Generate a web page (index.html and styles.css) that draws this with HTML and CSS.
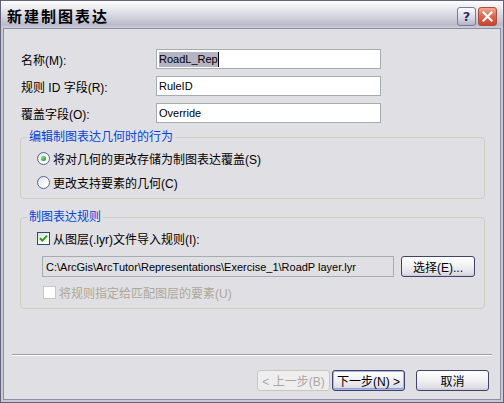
FILE: index.html
```html
<!DOCTYPE html>
<html lang="zh-CN">
<head>
    <meta charset="UTF-8">
    <title>新建制图表达</title>
    <link rel="stylesheet" href="styles.css">
</head>
<body>
    <div class="window">
        <div class="titlebar">
            <span class="title">新建制图表达</span>
            <div class="title-btns">
                <span class="tbtn help">?</span>
                <span class="tbtn close">
                    <svg width="11" height="11" viewBox="0 0 11 11">
                        <path d="M1.5 1.5 L9.5 9.5 M9.5 1.5 L1.5 9.5" stroke="#fff" stroke-width="2.2" stroke-linecap="square"/>
                    </svg>
                </span>
            </div>
        </div>
        <div class="client">
            <div class="content">
                <div class="fields">
                    <div class="field">
                        <label>名称(M):</label>
                        <div class="input"><span class="sel">RoadL_Rep</span><span class="caret"></span></div>
                    </div>
                    <div class="field">
                        <label>规则 ID 字段(R):</label>
                        <div class="input">RuleID</div>
                    </div>
                    <div class="field">
                        <label>覆盖字段(O):</label>
                        <div class="input">Override</div>
                    </div>
                </div>

                <fieldset class="group group-1">
                    <legend>编辑制图表达几何时的行为</legend>
                    <div class="group-body">
                        <div class="opt"><span class="radio checked"></span>将对几何的更改存储为制图表达覆盖(S)</div>
                        <div class="opt"><span class="radio"></span>更改支持要素的几何(C)</div>
                    </div>
                </fieldset>

                <fieldset class="group group-2">
                    <legend>制图表达规则</legend>
                    <div class="group-body">
                        <div class="opt">
                            <span class="check">
                                <svg width="9" height="9" viewBox="0 0 9 9">
                                    <path d="M1 4.2 L3.4 6.6 L8 1.6" fill="none" stroke="#21a121" stroke-width="2"/>
                                </svg>
                            </span>从图层(.lyr)文件导入规则(I):
                        </div>
                        <div class="path-row">
                            <div class="input path">C:\ArcGis\ArcTutor\Representations\Exercise_1\RoadP layer.lyr</div>
                            <span class="btn browse">选择(E)...</span>
                        </div>
                        <div class="opt disabled"><span class="check off"></span>将规则指定给匹配图层的要素(U)</div>
                    </div>
                </fieldset>
            </div>

            <div class="separator"></div>

            <div class="footer">
                <span class="btn back disabled">&lt; 上一步(B)</span>
                <span class="btn next focused">下一步(N) &gt;</span>
                <span class="btn cancel">取消</span>
            </div>
        </div>
    </div>
</body>
</html>
```

FILE: styles.css
```css
body {
    margin: 0;
    font-family: "Liberation Sans", "Noto Sans CJK SC", sans-serif;
    font-size: 12px;
    color: #000;
    background: #fff;
}
.window {
    width: 504px;
    height: 403px;
    box-sizing: border-box;
    border: 1px solid #62627a;
    background: #c9c9d6;
    padding: 0 2px 2px;
    display: flex;
    flex-direction: column;
}
.titlebar {
    height: 27px;
    margin: 0 -2px;
    padding: 0 6px 0 6px;
    display: flex;
    align-items: center;
    justify-content: space-between;
    background: linear-gradient(to bottom, #ffffff 0%, #f1f1f5 18%, #dedee6 45%, #c9c9d6 72%, #b9b9ca 88%, #cfcfdb 100%);
}
.title {
    font-family: "Noto Sans CJK SC", sans-serif;
    font-weight: bold;
    font-size: 15px;
    letter-spacing: 2px;
    line-height: 18px;
    margin-top: 2px;
}
.title-btns {
    display: flex;
    gap: 2px;
    margin-top: 3px;
}
.tbtn {
    width: 19px;
    height: 19px;
    box-sizing: border-box;
    border-radius: 3px;
    display: flex;
    align-items: center;
    justify-content: center;
}
.help {
    border: 1px solid #7a7a9a;
    background: linear-gradient(to bottom, #fbfbfd, #d6d6e4 60%, #b4b4c8);
    color: #2c2c5a;
    font-family: "DejaVu Sans", sans-serif;
    font-weight: bold;
    font-size: 13px;
    text-shadow: 0 0 1px #fff;
}
.close {
    border: 1px solid #a9503e;
    background: linear-gradient(to bottom, #f2a996, #df6b53 45%, #c8432c);
}
.client {
    flex: 1;
    background: #e0dfe3;
    border: 1px solid #8c8ca2;
    display: flex;
    flex-direction: column;
}
.content {
    padding: 20px 15px 0 16px;
}
.fields {
    display: flex;
    flex-direction: column;
    gap: 7px;
    padding-left: 1px;
}
.field {
    display: flex;
    align-items: center;
}
.field label {
    width: 135px;
}
.input {
    width: 225px;
    height: 20px;
    box-sizing: border-box;
    border: 1px solid #a5acb2;
    background: #fff;
    padding-left: 2px;
    font-size: 11px;
    display: flex;
    align-items: center;
    white-space: nowrap;
}
.sel {
    background: #b4b4c4;
    line-height: 15px;
}
.caret {
    width: 1px;
    height: 15px;
    background: #000;
}
.group {
    margin: 0;
    padding: 0 0 6px 6px;
    border: 1px solid #cfcfc0;
    border-radius: 4px;
}
.group legend {
    padding: 0 2px;
    color: #0046d5;
    line-height: 14px;
}
.group-1 {
    margin-top: 7px;
}
.group-2 {
    margin-top: 11px;
}
.group-body {
    padding: 4px 0 0 10px;
    display: flex;
    flex-direction: column;
    gap: 4px;
}
.opt {
    height: 20px;
    display: flex;
    align-items: center;
    white-space: nowrap;
}
.opt.disabled {
    color: #aca899;
}
.radio {
    width: 13px;
    height: 13px;
    box-sizing: border-box;
    border-radius: 50%;
    border: 1px solid #4e6a8e;
    background: linear-gradient(135deg, #dcdce4, #ffffff 70%);
    margin-right: 3px;
    display: flex;
    align-items: center;
    justify-content: center;
}
.radio.checked::after {
    content: "";
    width: 5px;
    height: 5px;
    border-radius: 50%;
    background: radial-gradient(circle at 35% 35%, #8ee08e, #21a121 70%);
}
.check {
    width: 13px;
    height: 13px;
    box-sizing: border-box;
    border: 1px solid #1c5180;
    background: linear-gradient(135deg, #dcdcd6, #ffffff 75%);
    margin-right: 3px;
    display: flex;
    align-items: center;
    justify-content: center;
}
.check.off {
    border-color: #cac8bb;
    background: #fff;
    margin-left: 6px;
}
.group-2 .group-body {
    gap: 0;
}
.path-row {
    display: flex;
    align-items: center;
    gap: 7px;
    margin: 8px 0 5px 5px;
}
.input.path {
    width: 352px;
    height: 21px;
    background: #e0dfe3;
    padding-left: 3px;
}
.btn {
    height: 21px;
    box-sizing: border-box;
    border: 1px solid #41416a;
    border-radius: 3px;
    background: linear-gradient(to bottom, #ffffff, #f0f0f3 50%, #dcdce4 90%, #c8c8d4);
    display: flex;
    align-items: center;
    justify-content: center;
    white-space: nowrap;
}
.browse {
    width: 74px;
}
.separator {
    margin: 45px 8px 0 8px;
    height: 1px;
    background: #9d9daa;
    border-bottom: 1px solid #fff;
}
.footer {
    display: flex;
    justify-content: flex-end;
    padding: 14px 11px 0 0;
}
.footer .btn {
    width: 73px;
}
.back {
    margin-right: 2px;
}
.next {
    margin-right: 11px;
}
.btn.disabled {
    border-color: #c9c7ba;
    color: #aca899;
    background: #eeeef0;
}
.btn.focused {
    box-shadow: inset 0 0 0 1px #a8b8e0, inset 0 -1px 0 1px #8fa4d8;
}
```
